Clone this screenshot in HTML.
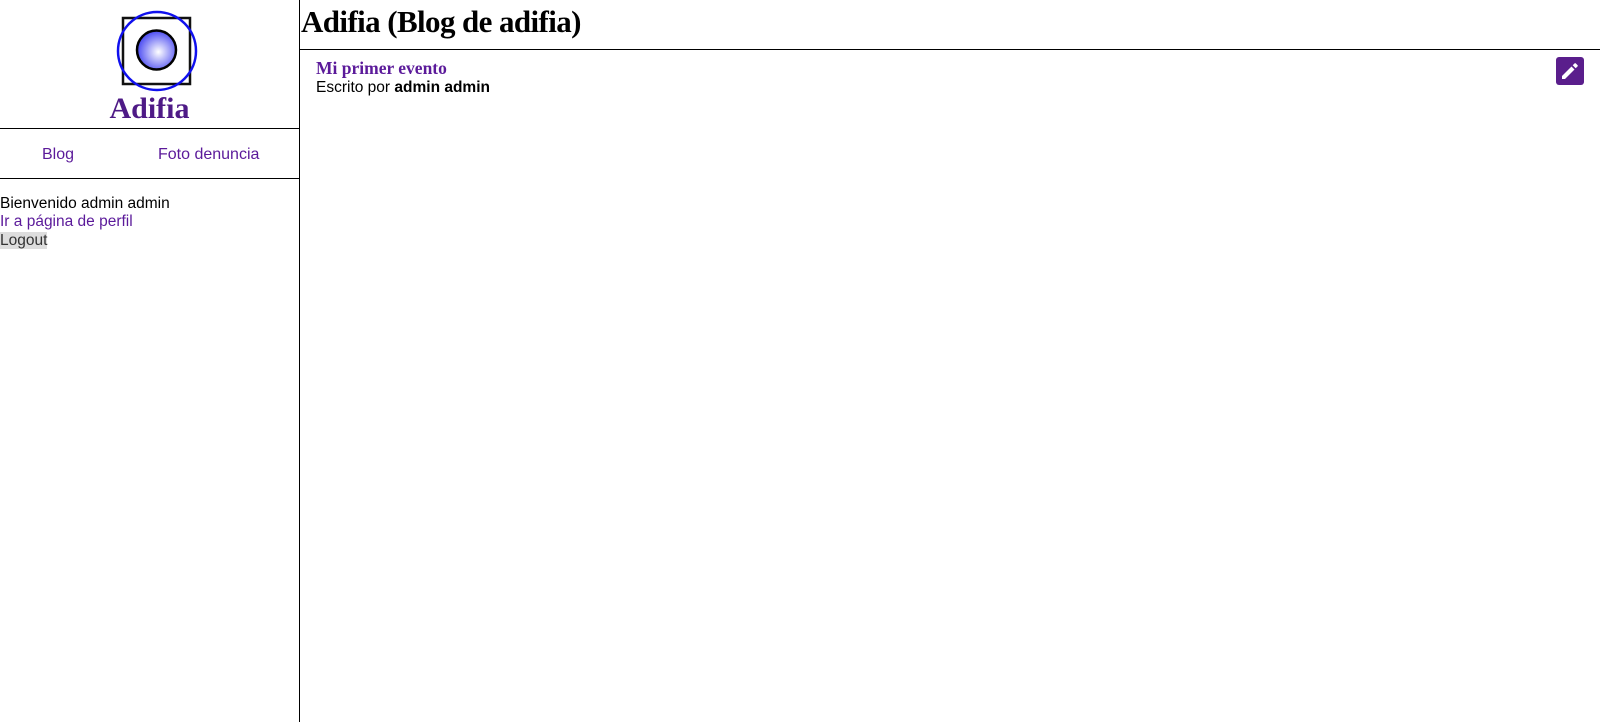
<!DOCTYPE html>
<html><head><meta charset="utf-8"><style>
body{margin:0;width:1600px;height:722px;background:#fff;font-family:"Liberation Sans",sans-serif;position:relative;overflow:hidden}
.side{position:absolute;left:0;top:0;width:299px;height:722px;border-right:1px solid #000}
.t{position:absolute;white-space:nowrap}
.serif{font-family:"Liberation Serif",serif;font-weight:bold}
a{color:#5b1a9a;text-decoration:none}
</style></head><body>
<div class="side">
<svg class="t" style="left:100px;top:0" width="110" height="100">
<defs><radialGradient id="g" cx="0.55" cy="0.55" r="0.6"><stop offset="0" stop-color="#fff"/><stop offset="1" stop-color="#3a3af0"/></radialGradient></defs>
<rect x="23" y="18" width="67" height="66" fill="none" stroke="#111" stroke-width="2.5"/>
<circle cx="57" cy="51" r="39" fill="none" stroke="#1010ee" stroke-width="2.5"/>
<circle cx="56.5" cy="50" r="19.5" fill="url(#g)" stroke="#000" stroke-width="2.5"/>
</svg>
<div class="t serif" style="left:0;width:299px;text-align:center;top:92px;font-size:30px;color:#4e1a86">Adifia</div>
<div class="t" style="left:0;top:128px;width:299px;border-top:1px solid #000"></div>
<div class="t" style="left:42px;top:146px;font-size:16px"><a>Blog</a></div>
<div class="t" style="left:158px;top:146px;font-size:16px"><a>Foto denuncia</a></div>
<div class="t" style="left:0;top:178px;width:299px;border-top:1px solid #000"></div>
<div class="t" style="left:0;top:195px;font-size:15.5px;line-height:18.3px">Bienvenido admin admin<br><a>Ir a página de perfil</a><br><span style="background:#ddd;color:#333">Logout</span></div>
</div>
<div class="t serif" style="left:301px;top:4px;font-size:31px;letter-spacing:-0.6px">Adifia (Blog de adifia)</div>
<div class="t" style="left:300px;top:49px;width:1300px;border-top:1px solid #000"></div>
<div class="t serif" style="left:316px;top:58px;font-size:17.5px;color:#5b1a9a">Mi primer evento</div>
<div class="t" style="left:316px;top:79px;font-size:15.5px">Escrito por <b>admin admin</b></div>
<div class="t" style="left:1556px;top:57px;width:28px;height:28px;background:#5a1e8c;border-radius:3px">
<svg width="28" height="28" viewBox="0 0 28 28"><path d="M6 19 L6 22 L9 22 L18.5 12.5 L15.5 9.5 Z M16.7 8.3 L19.7 11.3 L21.6 9.4 Q22.2 8.8 21.6 8.2 L19.8 6.4 Q19.2 5.8 18.6 6.4 Z" fill="#fff"/></svg>
</div>
</body></html>
